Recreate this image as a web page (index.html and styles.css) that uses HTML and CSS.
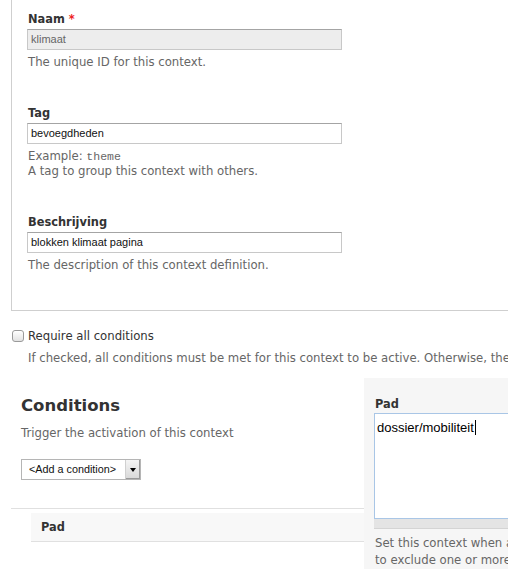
FILE: index.html
```html
<!DOCTYPE html>
<html>
<head>
<meta charset="utf-8">
<link rel="stylesheet" href="styles.css">
</head>
<body>
<div class="page">
  <div class="fieldset">
    <div class="field">
      <div class="label">Naam <span class="req">*</span></div>
      <div class="input disabled">klimaat</div>
      <div class="desc">The unique ID for this context.</div>
    </div>
    <div class="field">
      <div class="label">Tag</div>
      <div class="input">bevoegdheden</div>
      <div class="desc">Example: <code>theme</code><br>A tag to group this context with others.</div>
    </div>
    <div class="field">
      <div class="label">Beschrijving</div>
      <div class="input">blokken klimaat pagina</div>
      <div class="desc">The description of this context definition.</div>
    </div>
  </div>

  <div class="check-row">
    <span class="checkbox"></span>
    <span class="check-label">Require all conditions</span>
  </div>
  <div class="check-desc">If checked, all conditions must be met for this context to be active. Otherwise, the first condition that is met will activate this context.</div>

  <div class="conditions">
    <div class="cond-left">
      <div class="cond-head">
        <h2 class="cond-title">Conditions</h2>
        <div class="cond-sub">Trigger the activation of this context</div>
        <div class="select"><span class="select-text">&lt;Add a condition&gt;</span><span class="select-btn"><span class="tri"></span></span></div>
      </div>
      <div class="rule"></div>
      <div class="tab-row">Pad</div>
    </div>
    <div class="cond-right">
      <div class="label">Pad</div>
      <div class="textarea">dossier/mobiliteit<span class="caret"></span></div>
      <div class="grip"></div>
      <div class="right-desc">Set this context when any of the paths above match the page path. Put each path on a separate line. You can use the * character (asterisk) as a wildcard and the ~ character (tilde)<br>to exclude one or more paths. Use &lt;front&gt; for the site front page.</div>
    </div>
  </div>
</div>
</body>
</html>
```

FILE: styles.css
```css
html, body {
  margin: 0;
  padding: 0;
  overflow: hidden;
  background: #fff;
}
.page {
  width: 508px;
  height: 569px;
  overflow: hidden;
  font-family: "DejaVu Sans", Verdana, sans-serif;
  font-size: 11.7px;
  color: #666;
}
.fieldset {
  margin-left: 11px;
  width: 700px;
  border-left: 1px solid #cfcfcf;
  border-bottom: 1px solid #cfcfcf;
  padding: 11px 16px 38px 16px;
}
.field + .field {
  margin-top: 36px;
}
.label {
  font-weight: bold;
  font-size: 11.4px;
  line-height: 16px;
  color: #333;
}
.req {
  color: #e22;
}
.input {
  box-sizing: border-box;
  width: 315px;
  height: 21px;
  margin: 2px 0 0 -1px;
  border: 1px solid #c8c8c8;
  border-top-color: #a4a4a4;
  background: #fff;
  font-family: "Liberation Sans", Arial, sans-serif;
  font-size: 11px;
  line-height: 19px;
  padding: 0 3px;
  color: #111;
}
.input.disabled {
  background: #ededed;
  color: #666;
}
.desc {
  margin-top: 5px;
  line-height: 14px;
}
code {
  font-family: "Liberation Mono", "Courier New", monospace;
  font-size: 11.5px;
  color: #666;
}
.check-row {
  display: flex;
  align-items: center;
  margin: 18px 0 0 12px;
  height: 14px;
}
.checkbox {
  box-sizing: border-box;
  width: 12px;
  height: 12px;
  border: 1px solid #9a9a9a;
  border-radius: 3px;
  background: linear-gradient(#fff, #e2e2e2);
  box-shadow: inset 0 1px 0 #fff;
}
.check-label {
  margin-left: 4px;
  color: #333;
  line-height: 14px;
}
.check-desc {
  margin: 8px 0 0 28px;
  white-space: nowrap;
  line-height: 14px;
}
.conditions {
  display: flex;
  margin-top: 13px;
  height: 300px;
}
.cond-left {
  width: 353px;
  margin-left: 11px;
  flex: none;
}
.cond-head {
  padding: 18px 0 0 10px;
}
.cond-title {
  margin: 0;
  font-size: 16.5px;
  line-height: 20px;
  font-weight: bold;
  color: #333;
}
.cond-sub {
  margin-top: 10px;
  line-height: 14px;
}
.select {
  display: flex;
  box-sizing: border-box;
  width: 120px;
  height: 21px;
  margin-top: 19px;
  border: 1px solid #b5b5b5;
  background: #fff;
  font-family: "Liberation Sans", Arial, sans-serif;
  font-size: 10.8px;
  color: #111;
}
.select-text {
  flex: 1;
  padding-left: 7px;
  line-height: 19px;
}
.select-btn {
  width: 14px;
  display: flex;
  align-items: center;
  justify-content: center;
  background: linear-gradient(#f4f4f4, #d8d8d8);
  border-left: 1px solid #d0d0d0;
  box-shadow: inset -1px -1px 0 #999;
}
.tri {
  width: 0;
  height: 0;
  border-left: 3px solid transparent;
  border-right: 3px solid transparent;
  border-top: 4px solid #000;
}
.rule {
  margin-top: 28px;
  height: 1px;
  background: #e0e0e0;
}
.tab-row {
  margin: 4px 0 0 20px;
  height: 29px;
  box-sizing: border-box;
  border-bottom: 1px solid #e0e0e0;
  background: #f8f8f8;
  padding-left: 10px;
  font-weight: bold;
  font-size: 11.4px;
  line-height: 29px;
  color: #333;
}
.cond-right {
  flex: none;
  width: 260px;
  background: #f6f6f6;
  padding: 18px 0 0 11px;
}
.textarea {
  box-sizing: border-box;
  width: 250px;
  height: 106px;
  margin: 1px 0 0 -1px;
  border: 1px solid #a9c6e6;
  background: #fff;
  font-family: "Liberation Sans", Arial, sans-serif;
  font-size: 13px;
  line-height: 16px;
  padding: 6px 2px;
  color: #000;
}
.caret {
  display: inline-block;
  width: 1px;
  height: 15px;
  background: #000;
  vertical-align: -3px;
  margin-left: 1px;
}
.grip {
  width: 250px;
  height: 9px;
  margin-left: -1px;
  background: #e4e4e4;
  border-bottom: 1px solid #d4d4d4;
}
.right-desc {
  margin-top: 6px;
  white-space: nowrap;
  line-height: 17px;
}
```
